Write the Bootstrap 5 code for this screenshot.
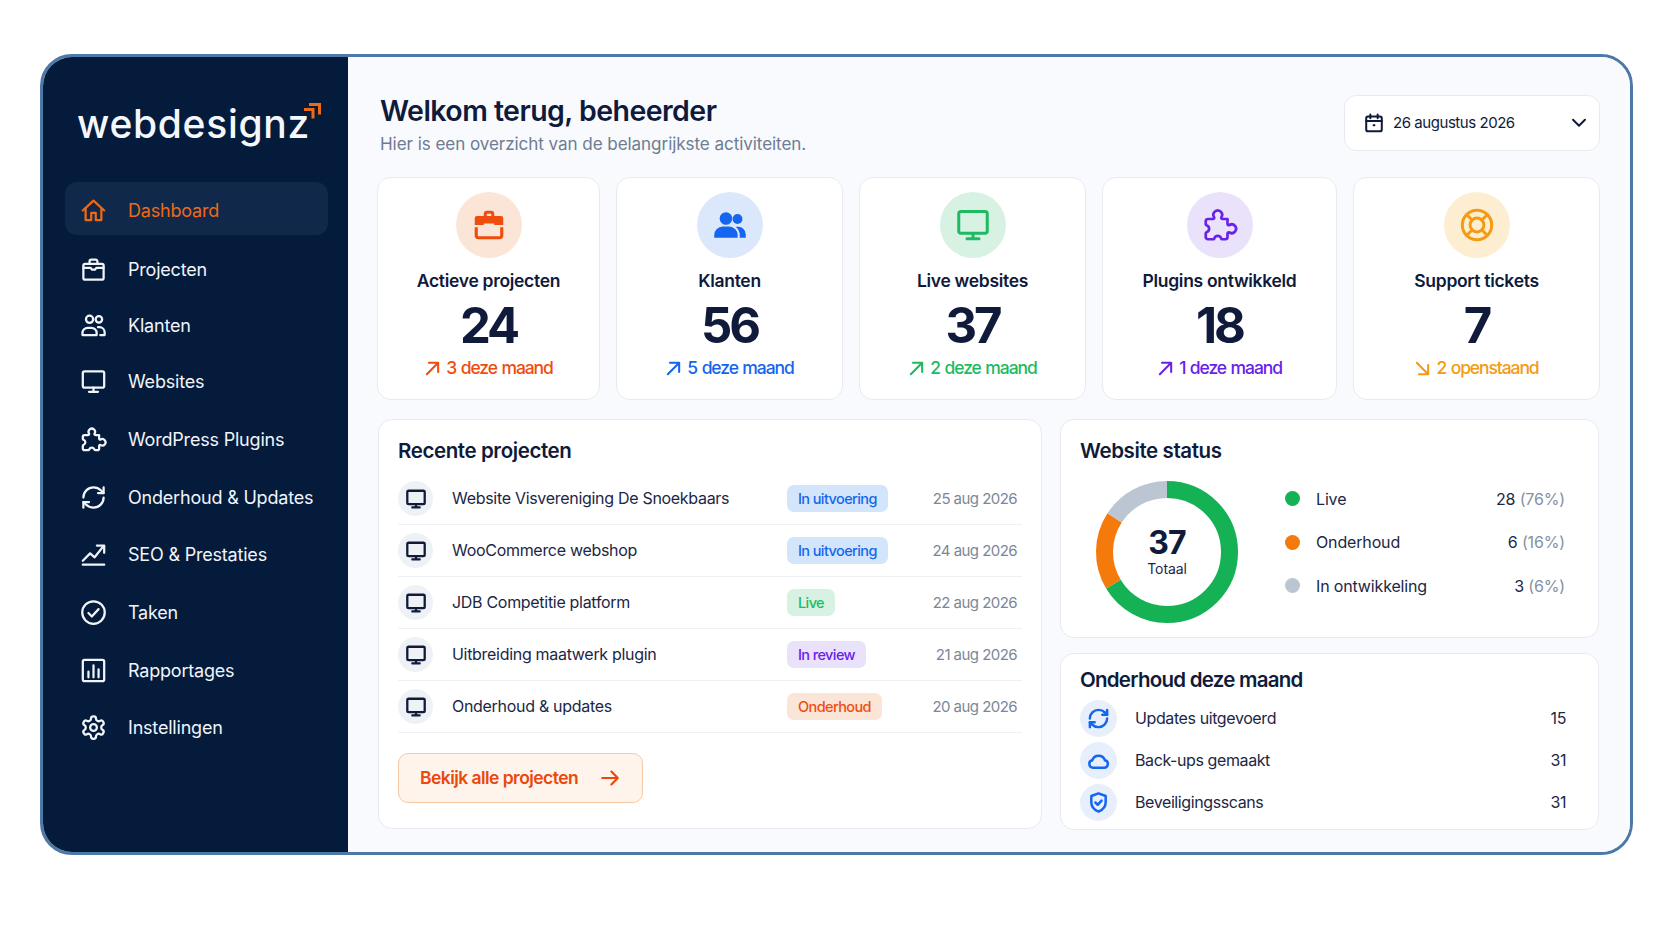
<!DOCTYPE html>
<html lang="nl">
<head>
<meta charset="utf-8">
<title>webdesignz dashboard</title>
<link href="https://cdn.jsdelivr.net/npm/bootstrap@5.3.0/dist/css/bootstrap.min.css" rel="stylesheet">
<style>
html,body{height:941px;overflow:hidden;background:#fff;font-family:Inter,"Liberation Sans",sans-serif;color:#101a3a}
.ic{fill:none;stroke:currentColor;stroke-width:2;stroke-linecap:round;stroke-linejoin:round;flex:none}
.frame{margin:54px 0 0 40px;width:1593px;height:801px;border:3px solid #4d79a8;border-radius:32px;overflow:hidden}
.side{width:305px;flex:none;background:#041b3c;padding-top:36px}
.logo{margin-left:34px;height:73px;position:relative}
.logo-text{font-size:39px;font-weight:500;color:#f4f7fb;letter-spacing:.7px;line-height:62px}
.logo-mark{position:absolute;left:226px;top:8px;width:19px;height:19px}
.navs{margin:16px 0 0 22px;width:263px}
.nav-i{height:57.7px;padding-left:15px;gap:21px;color:#f1f4f9;font-size:18px;letter-spacing:-.2px}
.nav-i .ic{width:27px;height:27px}
.nav-on{height:53px;background:#10284a;border-radius:12px;color:#ec6a15;margin-bottom:7px;padding-top:3px}
.nav-tight{height:55px}
.nav-tight2{height:56px}
.main{background:#f8fafd;padding:36px 30px 0 29px;min-width:0}
.head{height:58px;margin-bottom:26px}
.ttl{font-size:28.5px;font-weight:600;line-height:34px;margin:1px 0 0 3px;letter-spacing:-.55px;color:#0f1a3c}
.sub{font-size:17.1px;line-height:24px;margin:4px 0 0 3px;color:#6e7c92;letter-spacing:-.08px}
.date{width:256px;height:56px;margin-top:2px;background:#fff;border:1px solid #e6ebf2;border-radius:12px;padding:0 9px 0 18px;font-size:15px;letter-spacing:-.45px;gap:8px}
.date .ic{width:22px;height:22px;stroke-width:2.2}
.stats{display:grid;grid-template-columns:223fr 227fr 227fr 235fr 247fr;gap:16px;height:223px;margin-bottom:19px}
.pane{background:#fff;border:1px solid #e7ebf1;border-radius:14px}
.stat{padding-top:14px;text-align:center}
.orb{width:66px;height:66px;border-radius:50%;margin:0 auto 10px}
.orb .ic{width:36px;height:36px}
.orb .ic-thin{stroke-width:1.8}
.stat-l{font-size:17.5px;font-weight:600;line-height:26px;letter-spacing:-.3px;color:#101a3a}
.stat-n{font-size:49px;font-weight:700;line-height:56px;margin-top:4px;letter-spacing:-3px;color:#101a3a}
.stat-d{font-size:17.5px;font-weight:500;line-height:26px;margin-top:1px;letter-spacing:-1.1px;word-spacing:1px;gap:5px}
.stat-d .ic{width:17px;height:17px;stroke-width:2.9}
.t-or{color:#ee4d0e}.t-bl{color:#1565ef}.t-gr{color:#1dbb61}.t-pu{color:#6a21e8}.t-am{color:#f59a12}
.b-or{background:#fbe5d6}.b-bl{background:#dbe8fb}.b-gr{background:#d7f2e2}.b-pu{background:#e9e2fa}.b-am{background:#fdeed2}
.lower{display:grid;grid-template-columns:664px 539px;gap:18px;margin-left:1px}
.proj{height:410px;padding:0 19px}
.p-ttl{font-size:20.5px;font-weight:600;letter-spacing:-.4px;color:#101a3a;margin:0;line-height:28px}
.proj .p-ttl{padding:17px 0 8px}
.row-p{height:52px;border-bottom:1px solid #edf0f5;padding-right:5px;font-size:16px;letter-spacing:-.3px;color:#1c2746}
.circ{width:35px;height:35px;border-radius:50%;background:#eef2f7;flex:none;color:#101a3a}
.circ .ic{width:22px;height:22px;stroke-width:2.5}
.p-name{width:335px;margin-left:19px;flex:none;margin-top:-2px}
.tag{font-size:14.5px;font-weight:500;letter-spacing:-.6px;line-height:27px;padding:0 11px;border-radius:7px}
.tag.b-bl{background:#d3e5fb}
.p-date{font-size:15px;color:#7b8799;letter-spacing:-.55px;margin-top:1px}
.more{margin-top:20px;width:245px;height:50px;border:1px solid #f7c9a4;border-radius:10px;background:#fff4eb;padding:0 21px;font-size:17.5px;font-weight:600;letter-spacing:-.55px;color:#ea480c}
.more .ic{width:22px;height:22px;stroke-width:2.4}
.col-r{gap:15px}
.stat-p{height:219px;padding:0 19px}
.stat-p .p-ttl{padding-top:17px}
.ring{width:146px;height:146px;margin:14px 0 0 14px;position:relative;flex:none}
.ring svg{display:block}
.ring-c{position:absolute;inset:0}
.ring-n{font-size:32px;font-weight:700;line-height:34px;letter-spacing:-.8px}
.ring-t{font-size:14px;line-height:18px;color:#1c2746;letter-spacing:-.1px}
.legs{margin:12px 14px 0 45px;flex:1}
.leg{height:43.5px;font-size:16px;letter-spacing:-.15px;color:#1c2746}
.dot{width:15px;height:15px;border-radius:50%;margin-right:16px;flex:none}
.leg span.mut{color:#8491a3}
.main-p{height:177px;padding:0 19px}
.main-p .p-ttl{padding:12px 0 3px;letter-spacing:-.75px}
.row-m{height:42px;font-size:16px;letter-spacing:-.4px;color:#1c2746;padding-right:13px}
.circ2{width:37px;height:37px;border-radius:50%;background:#e6effb;color:#1565ef;flex:none;margin-right:18px}
.circ2 .ic{width:23px;height:23px;stroke-width:2.6}
</style>
</head>
<body>
<svg width="0" height="0" class="d-block position-absolute">
<defs>
<symbol id="i-home" viewBox="0 0 24 24"><path d="M2.500 12 12 3.200 21.500 12"/><path d="M5 10.500V20.500h5v-6.500h4v6.500h5V10.500"/></symbol>
<symbol id="i-case" viewBox="0 0 24 24"><rect x="3" y="7" width="18" height="14" rx="1.500"/><path d="M8.500 7V4.800A1.500 1.500 0 0 1 10 3.300h4a1.500 1.500 0 0 1 1.500 1.500V7"/><path d="M3 10.500h6.500l1 1.500h3l1-1.500H21"/></symbol>
<symbol id="i-users" viewBox="0 0 24 24"><circle cx="8.500" cy="6.500" r="3.200"/><circle cx="16.800" cy="6.500" r="2.900"/><path d="M2.200 20.500v-1.800a4.700 4.700 0 0 1 4.700-4.700h3.200a4.700 4.700 0 0 1 4.700 4.700v1.800z"/><path d="M16 13.500h1.300a4.600 4.600 0 0 1 4.600 4.600v2.400H18"/></symbol>
<symbol id="i-mon" viewBox="0 0 24 24"><rect x="2.500" y="3" width="19" height="14.500" rx="1.500"/><path d="M12 17.500V21M8 21.200h8"/></symbol>
<symbol id="i-puz" viewBox="1.500 0 24 24"><path d="M5.500 8h3.200c.9 0 1.100-.7.8-1.300a2.900 2.900 0 1 1 5 0c-.3.600-.1 1.300.8 1.300h3.200v3.200c0 .9.7 1.100 1.300.8a2.900 2.900 0 1 1 0 5c-.6-.3-1.300-.1-1.300.8v2.200a1.500 1.500 0 0 1-1.500 1.500h-2c-.5 0-.7-.4-.8-.8a2.400 2.400 0 0 0-4.400 0c-.1.400-.3.800-.8.800H5.500A1.500 1.500 0 0 1 4 20v-2.500c0-.5.400-.7.800-.8a2.400 2.400 0 0 0 0-4.400c-.4-.1-.8-.3-.8-.8v-2A1.500 1.500 0 0 1 5.500 8z"/></symbol>
<symbol id="i-sync" viewBox="0 0 24 24"><path d="M3 12a9 9 0 0 1 9-9 9.750 9.750 0 0 1 6.740 2.740L21 8"/><path d="M21 3v5h-5"/><path d="M21 12a9 9 0 0 1-9 9 9.750 9.750 0 0 1-6.740-2.740L3 16"/><path d="M8 16H3v5"/></symbol>
<symbol id="i-trend" viewBox="0 0 24 24"><path d="M2.500 21h19"/><path d="M2.500 17.500 9 11l4 3.500L20.500 5"/><path d="M15 4h6.500v6.500"/></symbol>
<symbol id="i-check" viewBox="0 0 24 24"><circle cx="12" cy="12" r="10"/><path d="m7.500 12.500 3 3 6-6.500"/></symbol>
<symbol id="i-chart" viewBox="0 0 24 24"><rect x="2.500" y="2.500" width="19" height="19" rx="1.500"/><path d="M7.500 18v-5M12 18V7.500M16.500 18v-7"/></symbol>
<symbol id="i-gear" viewBox="0 0 24 24"><path d="M12.220 2h-.44a2 2 0 0 0-2 2v.18a2 2 0 0 1-1 1.730l-.43.25a2 2 0 0 1-2 0l-.15-.08a2 2 0 0 0-2.730.73l-.22.38a2 2 0 0 0 .73 2.730l.15.1a2 2 0 0 1 1 1.720v.51a2 2 0 0 1-1 1.740l-.15.09a2 2 0 0 0-.73 2.730l.22.38a2 2 0 0 0 2.730.73l.15-.08a2 2 0 0 1 2 0l.43.25a2 2 0 0 1 1 1.730V20a2 2 0 0 0 2 2h.44a2 2 0 0 0 2-2v-.18a2 2 0 0 1 1-1.730l.43-.25a2 2 0 0 1 2 0l.15.08a2 2 0 0 0 2.730-.73l.22-.39a2 2 0 0 0-.73-2.730l-.15-.08a2 2 0 0 1-1-1.740v-.5a2 2 0 0 1 1-1.740l.15-.09a2 2 0 0 0 .73-2.730l-.22-.38a2 2 0 0 0-2.730-.73l-.15.08a2 2 0 0 1-2 0l-.43-.25a2 2 0 0 1-1-1.730V4a2 2 0 0 0-2-2z"/><circle cx="12" cy="12" r="3"/></symbol>
<symbol id="i-cal" viewBox="0 0 24 24"><rect x="3.500" y="5" width="17" height="16" rx="2"/><path d="M8 2.800v4M16 2.800v4M3.500 9.800h17M11.500 14.500h1"/></symbol>
<symbol id="i-down" viewBox="0 0 24 24"><path d="m5.500 8.500 6.500 6.500 6.500-6.500"/></symbol>
<symbol id="i-ne" viewBox="0 0 24 24"><path d="M4 20 20 4M7 4h13v13"/></symbol>
<symbol id="i-se" viewBox="0 0 24 24"><path d="M4 4l16 16M20 7v13H7"/></symbol>
<symbol id="i-right" viewBox="0 0 24 24"><path d="M3.500 12h17M13.500 5l7 7-7 7"/></symbol>
<symbol id="i-cloud" viewBox="0 0 24 24"><path d="M6.500 19.500h11.300a3.900 3.900 0 0 0 .9-7.700A7 7 0 0 0 5.500 11.800a3.900 3.900 0 0 0 1 7.700z"/></symbol>
<symbol id="i-shield" viewBox="0 0 24 24"><path d="M12 2.500 4.500 5.200v6.300c0 4.800 3.200 8.300 7.500 10 4.300-1.700 7.500-5.200 7.500-10V5.200z"/><path d="m8.800 12 2.400 2.400 4-4.400"/></symbol>
<symbol id="i-buoy" viewBox="0 0 24 24"><circle cx="12" cy="12" r="9.800"/><circle cx="12" cy="12" r="4.600"/><path d="m5.200 5.200 3.500 3.500M15.300 8.700l3.500-3.500M15.300 15.300l3.500 3.500M8.700 15.300l-3.500 3.500"/></symbol>
</defs>
</svg>

<div class="frame d-flex">
  <aside class="side">
    <div class="logo">
      <span class="logo-text">webdesignz</span>
      <svg class="logo-mark" viewBox="0 0 19 19" fill="none" stroke="#ee6a14" stroke-width="3"><path d="M6 3.500h10.500v10"/><path d="M1 8.500h9v9"/></svg>
    </div>
    <nav class="navs">
      <div class="nav-i nav-on d-flex align-items-center"><svg class="ic"><use href="#i-home"/></svg>Dashboard</div>
      <div class="nav-i nav-tight d-flex align-items-center"><svg class="ic"><use href="#i-case"/></svg>Projecten</div>
      <div class="nav-i nav-tight2 d-flex align-items-center"><svg class="ic"><use href="#i-users"/></svg>Klanten</div>
      <div class="nav-i d-flex align-items-center"><svg class="ic"><use href="#i-mon"/></svg>Websites</div>
      <div class="nav-i d-flex align-items-center"><svg class="ic"><use href="#i-puz"/></svg>WordPress Plugins</div>
      <div class="nav-i d-flex align-items-center"><svg class="ic"><use href="#i-sync"/></svg>Onderhoud &amp; Updates</div>
      <div class="nav-i d-flex align-items-center"><svg class="ic"><use href="#i-trend"/></svg>SEO &amp; Prestaties</div>
      <div class="nav-i d-flex align-items-center"><svg class="ic"><use href="#i-check"/></svg>Taken</div>
      <div class="nav-i d-flex align-items-center"><svg class="ic"><use href="#i-chart"/></svg>Rapportages</div>
      <div class="nav-i d-flex align-items-center"><svg class="ic"><use href="#i-gear"/></svg>Instellingen</div>
    </nav>
  </aside>

  <main class="main flex-grow-1">
    <header class="head d-flex justify-content-between align-items-start">
      <div>
        <h1 class="ttl">Welkom terug, beheerder</h1>
        <p class="sub">Hier is een overzicht van de belangrijkste activiteiten.</p>
      </div>
      <div class="date d-flex align-items-center">
        <svg class="ic"><use href="#i-cal"/></svg>
        <span class="flex-grow-1">26 augustus 2026</span>
        <svg class="ic"><use href="#i-down"/></svg>
      </div>
    </header>

    <section class="stats">
      <div class="pane stat">
        <div class="orb b-or t-or d-flex align-items-center justify-content-center"><svg class="ic" viewBox="0 0 24 24"><path fill="currentColor" stroke="none" d="M8.500 6V4.500A2 2 0 0 1 10.500 2.500h3a2 2 0 0 1 2 2V6H20a1.500 1.500 0 0 1 1.500 1.500V12h-6v-1h-7v1h-6V7.500A1.500 1.500 0 0 1 4 6zm2-1.500V6h3V4.500z"/><path fill="none" stroke-width="2.100" stroke-linecap="butt" d="M3.500 13.500v5.500a1.500 1.500 0 0 0 1.500 1.500h14a1.500 1.500 0 0 0 1.500-1.500v-5.500"/></svg></div>
        <div class="stat-l">Actieve projecten</div>
        <div class="stat-n">24</div>
        <div class="stat-d t-or d-flex align-items-center justify-content-center"><svg class="ic"><use href="#i-ne"/></svg>3 deze maand</div>
      </div>
      <div class="pane stat">
        <div class="orb b-bl t-bl d-flex align-items-center justify-content-center"><svg class="ic" viewBox="0 0 24 24"><g fill="currentColor" stroke="none"><circle cx="9.300" cy="7.700" r="4.200"/><circle cx="17" cy="8" r="3.300"/><path d="M1.500 20.500v-1.800a5.700 5.700 0 0 1 5.700-5.700h4.200a5.700 5.700 0 0 1 5.700 5.700v1.800z"/><path d="M18.500 20.500h4v-2.300a5 5 0 0 0-5-5h-1.700a7.500 7.500 0 0 1 2.700 5.500z"/></g></svg></div>
        <div class="stat-l">Klanten</div>
        <div class="stat-n">56</div>
        <div class="stat-d t-bl d-flex align-items-center justify-content-center"><svg class="ic"><use href="#i-ne"/></svg>5 deze maand</div>
      </div>
      <div class="pane stat">
        <div class="orb b-gr t-gr d-flex align-items-center justify-content-center"><svg class="ic"><use href="#i-mon"/></svg></div>
        <div class="stat-l">Live websites</div>
        <div class="stat-n">37</div>
        <div class="stat-d t-gr d-flex align-items-center justify-content-center"><svg class="ic"><use href="#i-ne"/></svg>2 deze maand</div>
      </div>
      <div class="pane stat">
        <div class="orb b-pu t-pu d-flex align-items-center justify-content-center"><svg class="ic ic-thin"><use href="#i-puz"/></svg></div>
        <div class="stat-l">Plugins ontwikkeld</div>
        <div class="stat-n">18</div>
        <div class="stat-d t-pu d-flex align-items-center justify-content-center"><svg class="ic"><use href="#i-ne"/></svg>1 deze maand</div>
      </div>
      <div class="pane stat">
        <div class="orb b-am t-am d-flex align-items-center justify-content-center"><svg class="ic"><use href="#i-buoy"/></svg></div>
        <div class="stat-l">Support tickets</div>
        <div class="stat-n">7</div>
        <div class="stat-d t-am d-flex align-items-center justify-content-center"><svg class="ic"><use href="#i-se"/></svg>2 openstaand</div>
      </div>
    </section>

    <section class="lower">
      <div class="pane proj">
        <h2 class="p-ttl">Recente projecten</h2>
        <div class="row-p d-flex align-items-center"><span class="circ d-flex align-items-center justify-content-center"><svg class="ic"><use href="#i-mon"/></svg></span><span class="p-name">Website Visvereniging De Snoekbaars</span><span class="flex-grow-1"><span class="tag b-bl t-bl d-inline-block">In uitvoering</span></span><span class="p-date">25 aug 2026</span></div>
        <div class="row-p d-flex align-items-center"><span class="circ d-flex align-items-center justify-content-center"><svg class="ic"><use href="#i-mon"/></svg></span><span class="p-name">WooCommerce webshop</span><span class="flex-grow-1"><span class="tag b-bl t-bl d-inline-block">In uitvoering</span></span><span class="p-date">24 aug 2026</span></div>
        <div class="row-p d-flex align-items-center"><span class="circ d-flex align-items-center justify-content-center"><svg class="ic"><use href="#i-mon"/></svg></span><span class="p-name">JDB Competitie platform</span><span class="flex-grow-1"><span class="tag b-gr t-gr d-inline-block">Live</span></span><span class="p-date">22 aug 2026</span></div>
        <div class="row-p d-flex align-items-center"><span class="circ d-flex align-items-center justify-content-center"><svg class="ic"><use href="#i-mon"/></svg></span><span class="p-name">Uitbreiding maatwerk plugin</span><span class="flex-grow-1"><span class="tag b-pu t-pu d-inline-block">In review</span></span><span class="p-date">21 aug 2026</span></div>
        <div class="row-p d-flex align-items-center"><span class="circ d-flex align-items-center justify-content-center"><svg class="ic"><use href="#i-mon"/></svg></span><span class="p-name">Onderhoud &amp; updates</span><span class="flex-grow-1"><span class="tag b-or t-or d-inline-block">Onderhoud</span></span><span class="p-date">20 aug 2026</span></div>
        <div class="more d-flex align-items-center justify-content-between">Bekijk alle projecten <svg class="ic"><use href="#i-right"/></svg></div>
      </div>

      <div class="col-r d-flex flex-column">
        <div class="pane stat-p">
          <h2 class="p-ttl">Website status</h2>
          <div class="d-flex">
            <div class="ring">
              <svg width="146" height="146" viewBox="0 0 146 146" fill="none" stroke-width="17">
                <circle cx="73" cy="73" r="62.500" stroke="#15b155" pathLength="360" stroke-dasharray="239 121" transform="rotate(-90 73 73)"/>
                <circle cx="73" cy="73" r="62.500" stroke="#f57a0c" pathLength="360" stroke-dasharray="64 296" transform="rotate(149 73 73)"/>
                <circle cx="73" cy="73" r="62.500" stroke="#bcc6d2" pathLength="360" stroke-dasharray="57 303" transform="rotate(213 73 73)"/>
              </svg>
              <div class="ring-c d-flex flex-column align-items-center justify-content-center"><div class="ring-n">37</div><div class="ring-t">Totaal</div></div>
            </div>
            <div class="legs">
              <div class="leg d-flex align-items-center"><span class="dot" style="background:#15b155"></span><span class="flex-grow-1">Live</span><span>28 <span class="mut">(76%)</span></span></div>
              <div class="leg d-flex align-items-center"><span class="dot" style="background:#f57a0c"></span><span class="flex-grow-1">Onderhoud</span><span>6 <span class="mut">(16%)</span></span></div>
              <div class="leg d-flex align-items-center"><span class="dot" style="background:#bcc6d2"></span><span class="flex-grow-1">In ontwikkeling</span><span>3 <span class="mut">(6%)</span></span></div>
            </div>
          </div>
        </div>
        <div class="pane main-p">
          <h2 class="p-ttl">Onderhoud deze maand</h2>
          <div class="row-m d-flex align-items-center"><span class="circ2 d-flex align-items-center justify-content-center"><svg class="ic"><use href="#i-sync"/></svg></span><span class="flex-grow-1">Updates uitgevoerd</span><span>15</span></div>
          <div class="row-m d-flex align-items-center"><span class="circ2 d-flex align-items-center justify-content-center"><svg class="ic"><use href="#i-cloud"/></svg></span><span class="flex-grow-1">Back-ups gemaakt</span><span>31</span></div>
          <div class="row-m d-flex align-items-center"><span class="circ2 d-flex align-items-center justify-content-center"><svg class="ic"><use href="#i-shield"/></svg></span><span class="flex-grow-1">Beveiligingsscans</span><span>31</span></div>
        </div>
      </div>
    </section>
  </main>
</div>
<script src="https://cdn.jsdelivr.net/npm/bootstrap@5.3.0/dist/js/bootstrap.bundle.min.js"></script>
</body>
</html>
